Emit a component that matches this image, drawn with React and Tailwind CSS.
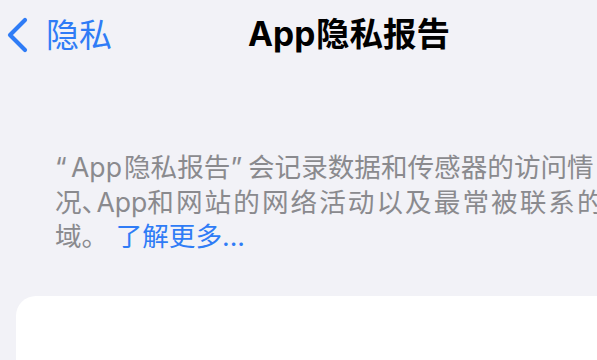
export default function App() {
  const font = { fontFamily: '"Inter", "Noto Sans CJK SC", sans-serif' };
  return (
    <div className="w-[597px] h-[360px] overflow-hidden bg-[#f2f2f7]" style={font}>
      <div className="flex items-center h-[70px] pl-[5px] whitespace-nowrap">
        <svg width="24" height="36" viewBox="0 0 24 36" className="shrink-0">
          <path d="M20 3 L5 18 L20 33" fill="none" stroke="#2f7cf6" strokeWidth="4.2" strokeLinecap="round" strokeLinejoin="round" />
        </svg>
        <span className="ml-[17px] text-[33px] leading-none text-[#2f7cf6]">隐私</span>
        <span className="ml-[136px] flex items-center text-[33.5px] leading-none font-bold text-black">
          <span className="inline-block w-[68px]">App</span>
          <span>隐私报告</span>
        </span>
      </div>
      <div className="mt-[80px] pl-[55px] text-[26.6px] leading-[34.5px] text-[#8a8a8e] whitespace-nowrap">
        <div className="flex">
          <span className="inline-block w-[16px]">“</span>
          <span className="inline-block w-[53px]">App</span>
          <span>隐私报告</span>
          <span className="inline-block w-[17.6px]">”</span>
          <span>会记录数据和传感器的访问情</span>
        </div>
        <div className="flex">
          <span>况</span>
          <span className="[font-feature-settings:'halt'] mr-[1.5px]">、</span>
          <span className="inline-block w-[52px]">App</span>
          <span className="tracking-[2.05px]">和网站的网络活动以及最常被联系的</span>
        </div>
        <div>
          域。 <span className="text-[#2f7cf6]">了解更多...</span>
        </div>
      </div>
      <div className="mt-[42px] ml-[16px] w-[640px] h-[200px] bg-white rounded-[20px]" />
    </div>
  );
}
